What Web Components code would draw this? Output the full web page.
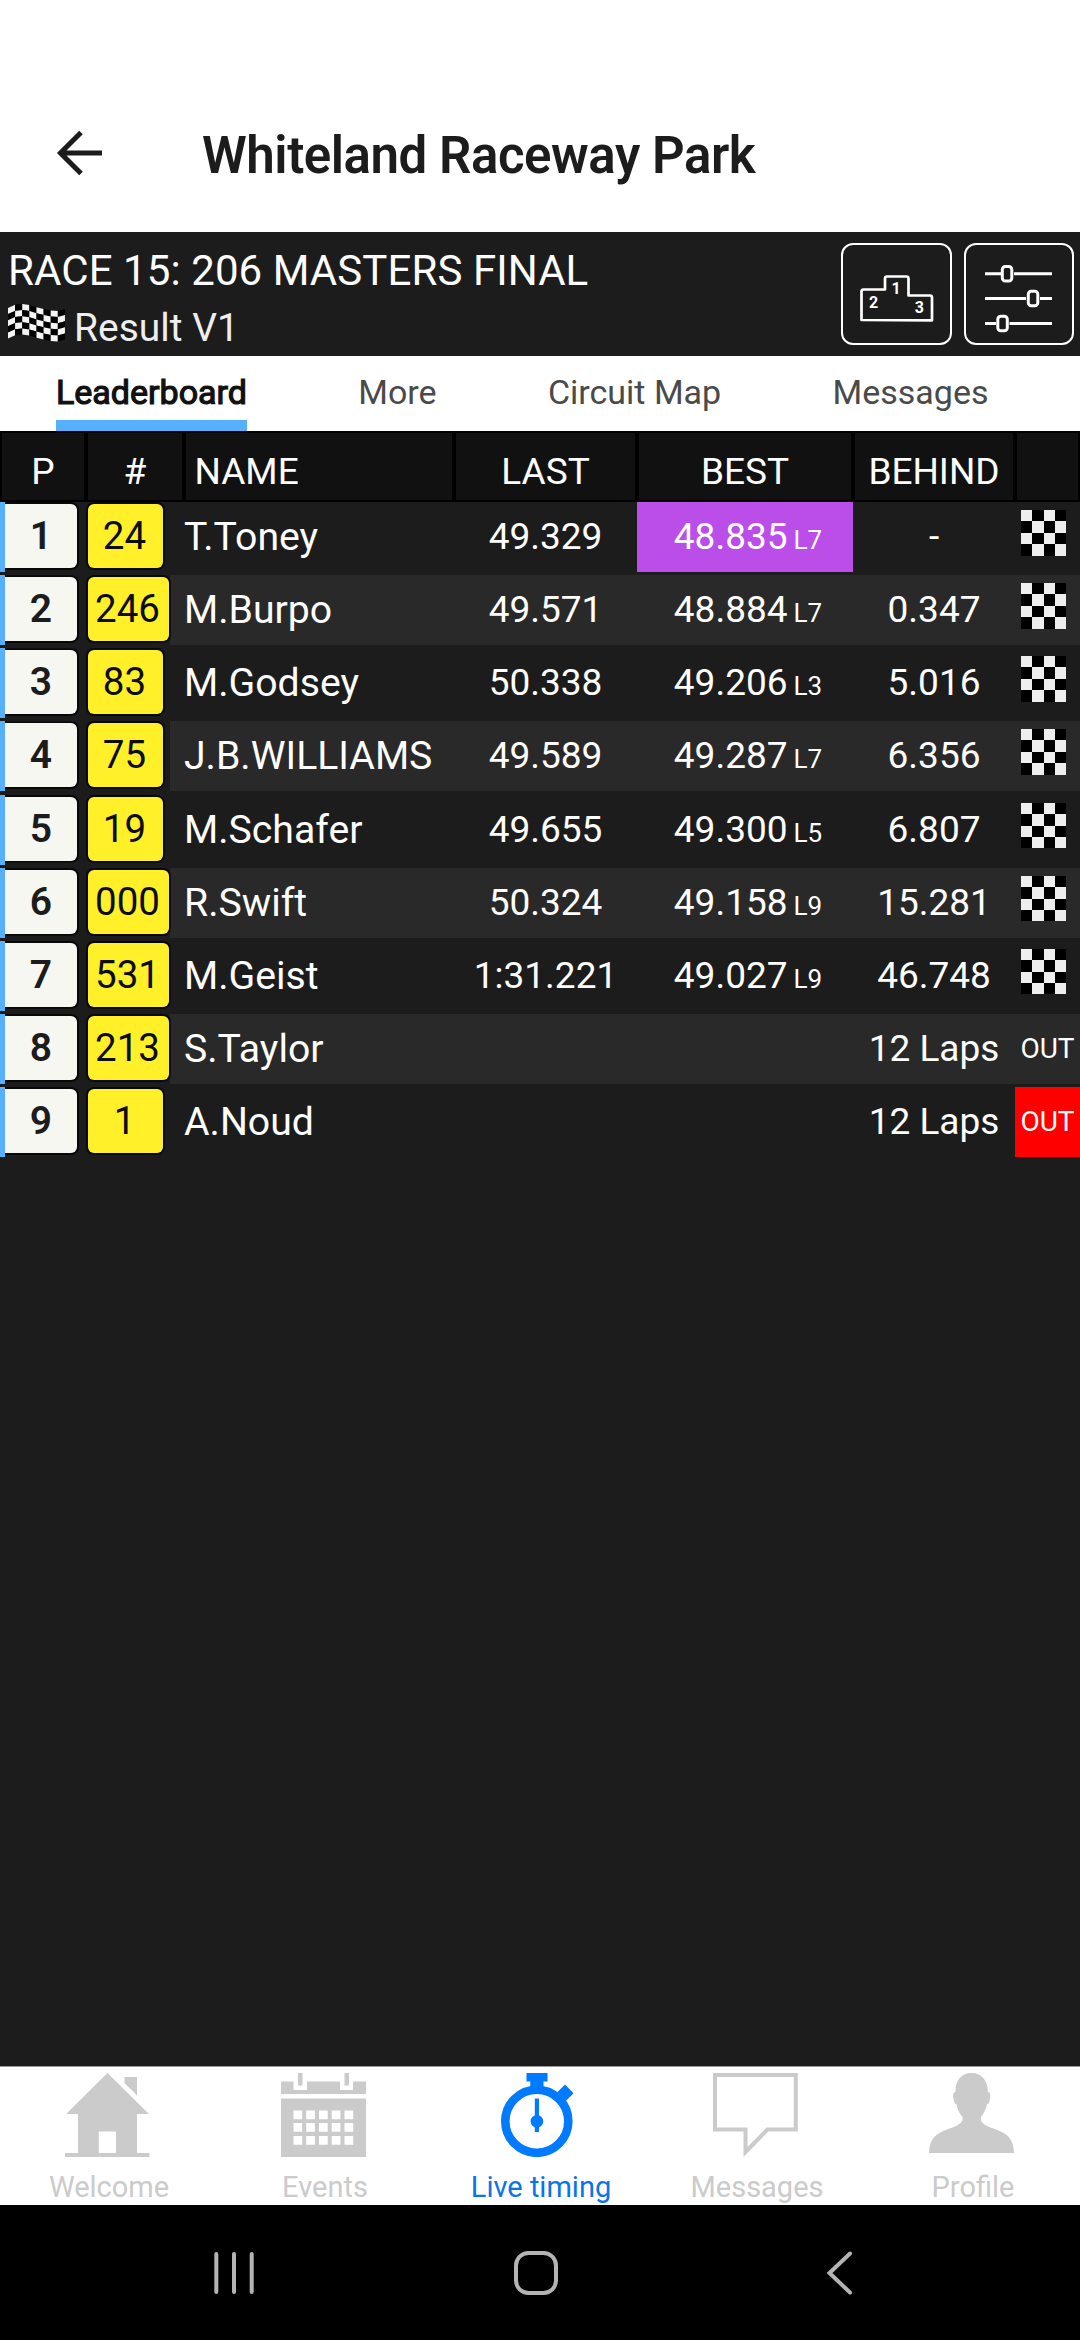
<!DOCTYPE html>
<html lang="en">
<head>
<meta charset="utf-8">
<meta name="viewport" content="width=device-width, initial-scale=1">
<title>Whiteland Raceway Park</title>
<style>
  body {
    margin: 0;
    background: #1c1c1c;
    font-family: Roboto, sans-serif;
  }
</style>
</head>
<body>
<timing-app></timing-app>

<script>
const results = [
  { pos: 1, num: "24", name: "T.Toney", last: "49.329", best: "48.835", lap: "L7", behind: "-", state: "flag", fastest: true },
  { pos: 2, num: "246", name: "M.Burpo", last: "49.571", best: "48.884", lap: "L7", behind: "0.347", state: "flag" },
  { pos: 3, num: "83", name: "M.Godsey", last: "50.338", best: "49.206", lap: "L3", behind: "5.016", state: "flag" },
  { pos: 4, num: "75", name: "J.B.WILLIAMS", last: "49.589", best: "49.287", lap: "L7", behind: "6.356", state: "flag" },
  { pos: 5, num: "19", name: "M.Schafer", last: "49.655", best: "49.300", lap: "L5", behind: "6.807", state: "flag" },
  { pos: 6, num: "000", name: "R.Swift", last: "50.324", best: "49.158", lap: "L9", behind: "15.281", state: "flag" },
  { pos: 7, num: "531", name: "M.Geist", last: "1:31.221", best: "49.027", lap: "L9", behind: "46.748", state: "flag" },
  { pos: 8, num: "213", name: "S.Taylor", behind: "12 Laps", state: "out" },
  { pos: 9, num: "1", name: "A.Noud", behind: "12 Laps", state: "out", alert: true },
];

// Column widths shared by the header and the rows
const columns = "86px 98px 270px 183px 216px 162px 65px";

class AppBar extends HTMLElement {
  constructor() {
    super();
    this.attachShadow({ mode: "open" }).innerHTML = `
    <style>
    :host {
      display: flex;
      align-items: center;
      box-sizing: border-box;
      height: 232px;
      padding: 78px 0 0 56px;
      background: #fff;
      color: #1c1c1c;
    }
    svg {
      margin: 0 100px 4px 0;
    }
    h1 {
      margin: 0;
      padding-top: 2px;
      font-size: 51px;
      font-weight: 600;
      line-height: 60px;
      letter-spacing: -0.45px;
      white-space: nowrap;
    }
    </style>
    <svg width="46" height="46" viewBox="0 0 46 46" fill="none" stroke="#1c1c1c" stroke-width="5">
      <path d="M46 23H5M25 2.5L4.500 23L25 43.500"/>
    </svg>
    <h1><slot></slot></h1>
    `;
  }
}

class WavingFlag extends HTMLElement {
  constructor() {
    super();
    // top edge of the cloth at each column boundary
    const wave = [4, 0.8, 0, 1, 3.2, 5, 6.5, 7, 5];
    let cells = "";
    for (let c = 0; c < 8; c++) {
      for (let r = 0; r < 5; r++) {
        const x = c * 7.12;
        const y1 = wave[c] + r * 6.1;
        const y2 = wave[c + 1] + r * 6.1;
        const fill = (c + r) % 2 ? "#000" : "#f4f4f4";
        cells += `<path fill="${fill}" d="M${x} ${y1}L${x + 7.12} ${y2}v6.1L${x} ${y1 + 6.1}z"/>`;
      }
    }
    this.attachShadow({ mode: "open" }).innerHTML = `
    <style>
    :host { display: block; height: 38px; }
    svg { display: block; }
    </style>
    <svg width="57" height="38" viewBox="0 0 57 38">${cells}</svg>
    `;
  }
}

class IconButton extends HTMLElement {
  constructor() {
    super();
    this.attachShadow({ mode: "open" }).innerHTML = `
    <style>
    :host {
      display: flex;
      box-sizing: border-box;
      width: 110.5px;
      height: 102px;
      border: 2px solid #fff;
      border-radius: 12px;
      align-items: center;
      justify-content: center;
    }
    </style>
    <slot></slot>
    `;
  }
}

class RaceHeader extends HTMLElement {
  constructor() {
    super();
    this.attachShadow({ mode: "open" }).innerHTML = `
    <style>
    :host {
      display: flex;
      justify-content: space-between;
      box-sizing: border-box;
      height: 123.5px;
      padding: 11px 6px 0 8px;
      background: #1c1c1c;
      color: #fff;
    }
    .name {
      font-size: 42px;
      line-height: 55px;
      letter-spacing: 0.08px;
      white-space: nowrap;
    }
    .status {
      display: flex;
      gap: 9px;
      font-size: 39px;
      line-height: 60px;
      color: #eee;
    }
    waving-flag { margin-top: 6px; }
    .buttons {
      display: flex;
      gap: 12px;
    }
    svg { display: block; }
    svg text {
      font: 700 16px Roboto, sans-serif;
      fill: #fff;
      stroke: none;
      text-anchor: middle;
    }
    </style>
    <div>
      <div class="name"><slot name="race"></slot></div>
      <div class="status"><waving-flag></waving-flag><slot name="status"></slot></div>
    </div>
    <div class="buttons">
      <icon-button>
        <svg width="106" height="98" viewBox="843 245 106 98" fill="none" stroke="#fff" stroke-width="2.7" stroke-linejoin="round">
          <path d="M861.5 320V291.5Q861.5 289.5 863.5 289.5H885V278.5Q885 276.5 887 276.5H906.5Q908.5 276.5 908.5 278.5V295.5H930Q932 295.5 932 297.5V320.3Z"/>
          <text x="896" y="294">1</text>
          <text x="873.7" y="308">2</text>
          <text x="919.3" y="313">3</text>
        </svg>
      </icon-button>
      <icon-button>
        <svg width="106" height="98" viewBox="966 245 106 98" fill="none" stroke="#fff" stroke-width="3">
          <path d="M985 273.7H1001M1014 273.7H1052M985 298.5H1026M1040 298.5H1052M985 323.5H996M1009.5 323.5H1052"/>
          <rect x="1002.3" y="266.5" width="9.5" height="14.5" rx="3"/>
          <rect x="1028.3" y="291.2" width="9.5" height="14.5" rx="3"/>
          <rect x="997.8" y="316.2" width="9.5" height="14.5" rx="3"/>
        </svg>
      </icon-button>
    </div>
    `;
  }
}

class TabItem extends HTMLElement {
  constructor() {
    super();
    this.attachShadow({ mode: "open" }).innerHTML = `
    <style>
    :host {
      display: block;
      box-sizing: border-box;
      height: 75.5px;
      color: #4a4a4a;
      font-size: 34px;
      line-height: 72px;
      white-space: nowrap;
    }
    :host([active]) {
      color: #111;
      border-bottom: 11px solid #57b0fb;
      -webkit-text-stroke: 1.2px #111;
    }
    </style>
    <slot></slot>
    `;
  }
}

class TabBar extends HTMLElement {
  constructor() {
    super();
    this.attachShadow({ mode: "open" }).innerHTML = `
    <style>
    :host {
      display: flex;
      justify-content: space-between;
      padding: 0 91.5px 0 56px;
      background: #fff;
    }
    </style>
    <slot></slot>
    `;
  }
}

class ResultRow extends HTMLElement {
  constructor() {
    super();
    this.attachShadow({ mode: "open" });
  }

  set result(result) {
    this._result = result;
    this.render();
  }

  render() {
    const { pos, num, name, last = "", best = "", lap = "", behind, state, fastest, alert } = this._result;
    this.shadowRoot.innerHTML = `
    <style>
    :host {
      display: grid;
      grid-template-columns: ${columns};
      grid-template-rows: 70px;
      height: 70px;
      background: ${pos % 2 ? "#1c1c1c" : "#292929"};
      color: #fff;
      font-size: 37px;
      line-height: 70px;
      text-align: center;
      white-space: nowrap;
    }
    .pos {
      border-left: 5px solid #57b0fb;
      background: #1c1c1c;
    }
    .num { background: #1c1c1c; width: 84px; }
    .tile {
      box-sizing: border-box;
      height: 64px;
      margin-top: 2px;
      font-size: 39px;
      line-height: 64px;
      box-shadow: 0 0 0 2px #080808;
    }
    .pos .tile {
      width: 72px;
      border-radius: 0 6px 6px 0;
      background: #f7f7f2;
      color: #1c1c1c;
      font-weight: 600;
      /* keeps the outline off the blue strip */
      clip-path: inset(-2px -2px -2px 0);
    }
    .num .tile {
      width: fit-content;
      min-width: 75px;
      margin-left: 2px;
      padding: 0 9px 0 7px;
      border-radius: 6px;
      background: #fff02a;
      color: #0c0c0c;
      font-size: 38.5px;
    }
    .name {
      font-size: 39.2px;
      text-align: left;
    }
    .best { padding-left: 6px; }
    .best.fastest { background: #bb4ee8; }
    .best small {
      margin-left: 6px;
      font-size: 26px;
      line-height: 1;
    }
    .state { font-size: 28px; }
    .state.alert { background: #f00; }
    .state svg { display: block; margin: 8px 0 0 6px; }
    </style>
    <div class="pos"><div class="tile">${pos}</div></div>
    <div class="num"><div class="tile">${num}</div></div>
    <div class="name">${name}</div>
    <div>${last}</div>
    <div class="best ${fastest ? "fastest" : ""}">${best}${lap && `<small>${lap}</small>`}</div>
    <div>${behind}</div>
    <div class="state ${alert ? "alert" : ""}">${state === "flag" ? this.flag() : "OUT"}</div>
    `;
  }

  flag() {
    return `
    <svg width="45" height="45.5" viewBox="0 0 4 4" preserveAspectRatio="none" shape-rendering="crispEdges">
      <path fill="#000" d="M0 0h4v4H0z"/>
      <path fill="#eee" d="M0 0h1v1H0zM2 0h1v1H2zM1 1h1v1H1zM3 1h1v1H3zM0 2h1v1H0zM2 2h1v1H2zM1 3h1v1H1zM3 3h1v1H3z"/>
    </svg>`;
  }
}

class ResultTable extends HTMLElement {
  constructor() {
    super();
    this.attachShadow({ mode: "open" });
  }

  set results(results) {
    this._results = results;
    this.render();
  }

  render() {
    this.shadowRoot.innerHTML = `
    <style>
    :host {
      display: flex;
      flex-direction: column;
      gap: 3.14px;
      background: #1c1c1c;
    }
    header {
      display: grid;
      grid-template-columns: ${columns};
      height: 71px;
      margin-bottom: -3.14px;
      background: #111;
      color: #fff;
      font-size: 37px;
      line-height: 78px;
      text-align: center;
    }
    header div {
      box-sizing: border-box;
      height: 71px;
      border: 2px solid #000;
    }
    header .name {
      padding-left: 8.5px;
      text-align: left;
    }
    </style>
    <header>
      <div>P</div>
      <div>#</div>
      <div class="name">NAME</div>
      <div>LAST</div>
      <div>BEST</div>
      <div>BEHIND</div>
      <div></div>
    </header>
    `;

    this._results.forEach((result) => {
      const row = document.createElement("result-row");
      row.result = result;
      this.shadowRoot.appendChild(row);
    });
  }
}

class NavItem extends HTMLElement {
  constructor() {
    super();
    this.attachShadow({ mode: "open" }).innerHTML = `
    <style>
    :host {
      display: flex;
      flex: 1;
      flex-direction: column;
      align-items: center;
      padding-top: 6px;
      color: #cbcbcb;
      font-size: 29px;
      line-height: 34px;
      white-space: nowrap;
    }
    :host([active]) { color: #007aff; }
    svg {
      display: block;
      width: 85px;
      height: 84px;
      margin: 0 2px 13px 0;
    }
    .label { padding-left: 2px; }
    :host([active]) .label { color: #0a74e8; }
    </style>
    <svg viewBox="0 0 85 84" fill="currentColor">${NavItem.icons[this.getAttribute("icon")]}</svg>
    <div class="label"><slot></slot></div>
    `;
  }
}

NavItem.icons = {
  home: `
    <path d="M42.5 0L84 41H72V80H84.5V84H0V80H13V41H1Z"/>
    <path d="M59.5 4H72V22.5L59.5 10Z"/>
    <path fill="#fff" d="M33.8 58.5H51V80H33.8Z"/>`,
  calendar: `
    <path d="M17 0h4.5v12.5H17zM63.5 0H68v12.5h-4.5z"/>
    <path d="M0 8.5h12.5V17H26V8.5h33V17h13V8.5h13V21H0z"/>
    <path d="M0 25.5h85V84H0z"/>
    <path fill="#fff" d="${[12.5, 25.2, 38, 50.7, 63.5].map((x) => [37.5, 50, 63].map((y) => `M${x} ${y}h8.7v8.8h-8.7z`).join("")).join("")}"/>`,
  stopwatch: `
    <circle cx="39.8" cy="48.3" r="31.5" fill="none" stroke="currentColor" stroke-width="8.6"/>
    <path d="M29.5 0h21v8.5h-4V16H33.3V8.5h-3.8zM68 11.5L76.5 20.2L68.8 28L60 19.5Z"/>
    <path d="M37.8 25.5h4.2V59h-4.2z"/>
    <circle cx="39.9" cy="48.3" r="6.3"/>`,
  message: `
    <path fill="none" stroke="currentColor" stroke-width="4" d="M2 2H82.8V56.5H54.5L32.5 79V56.5H2Z"/>`,
  person: `
    <path d="M42.5 0C52 0 59 7 58.8 19C62 19 61.5 24 60.5 28C60 30.5 59 31 58 31C57.5 36 54 41 52 44V47.5C54 52 60 54 67 56.5C79 61 84.5 66 85 80H0C.5 66 6 61 18 56.5C25 54 31 52 33.5 47.5V44C31 41 28 36 27.5 31C26 31 25.5 30.5 25 28C24 24 23.5 19 26.5 19C26 7 33 0 42.5 0Z"/>`,
};

class BottomNav extends HTMLElement {
  constructor() {
    super();
    this.attachShadow({ mode: "open" }).innerHTML = `
    <style>
    :host {
      display: flex;
      box-sizing: border-box;
      height: 139px;
      border-top: 1px solid #999;
      background: #fff;
    }
    </style>
    <slot></slot>
    `;
  }
}

class SystemBar extends HTMLElement {
  constructor() {
    super();
    this.attachShadow({ mode: "open" }).innerHTML = `
    <style>
    :host {
      display: grid;
      grid-template-columns: repeat(3, 1fr);
      align-items: center;
      justify-items: center;
      box-sizing: border-box;
      height: 135px;
      padding: 0 90px 0 83px;
      background: #000;
    }
    </style>
    <svg width="46" height="46" fill="none" stroke="#b4b4b4" stroke-width="4" stroke-linecap="round">
      <path d="M5.3 4V42M23 4V42M40.7 4V42"/>
    </svg>
    <svg width="46" height="46" fill="none" stroke="#b4b4b4" stroke-width="4">
      <rect x="3" y="3" width="40" height="40" rx="12.5"/>
    </svg>
    <svg width="46" height="46" fill="none" stroke="#b4b4b4" stroke-width="4" stroke-linecap="round">
      <path d="M34 3.5L13.5 23L34 42.5"/>
    </svg>
    `;
  }
}

class TimingApp extends HTMLElement {
  constructor() {
    super();
    this.attachShadow({ mode: "open" }).innerHTML = `
    <style>
    :host {
      display: flex;
      flex-direction: column;
      height: 2340px;
      background: #1c1c1c;
    }
    main { flex: 1; }
    </style>
    <app-bar>Whiteland Raceway Park</app-bar>
    <race-header>
      <span slot="race">RACE 15: 206 MASTERS FINAL</span>
      <span slot="status">Result V1</span>
    </race-header>
    <tab-bar>
      <tab-item active>Leaderboard</tab-item>
      <tab-item>More</tab-item>
      <tab-item>Circuit Map</tab-item>
      <tab-item>Messages</tab-item>
    </tab-bar>
    <main><result-table></result-table></main>
    <bottom-nav>
      <nav-item icon="home">Welcome</nav-item>
      <nav-item icon="calendar">Events</nav-item>
      <nav-item icon="stopwatch" active>Live timing</nav-item>
      <nav-item icon="message">Messages</nav-item>
      <nav-item icon="person">Profile</nav-item>
    </bottom-nav>
    <system-bar></system-bar>
    `;
  }

  connectedCallback() {
    this.shadowRoot.querySelector("result-table").results = results;
  }
}

customElements.define("app-bar", AppBar);
customElements.define("waving-flag", WavingFlag);
customElements.define("icon-button", IconButton);
customElements.define("race-header", RaceHeader);
customElements.define("tab-item", TabItem);
customElements.define("tab-bar", TabBar);
customElements.define("result-row", ResultRow);
customElements.define("result-table", ResultTable);
customElements.define("nav-item", NavItem);
customElements.define("bottom-nav", BottomNav);
customElements.define("system-bar", SystemBar);
customElements.define("timing-app", TimingApp);
</script>
</body>
</html>
